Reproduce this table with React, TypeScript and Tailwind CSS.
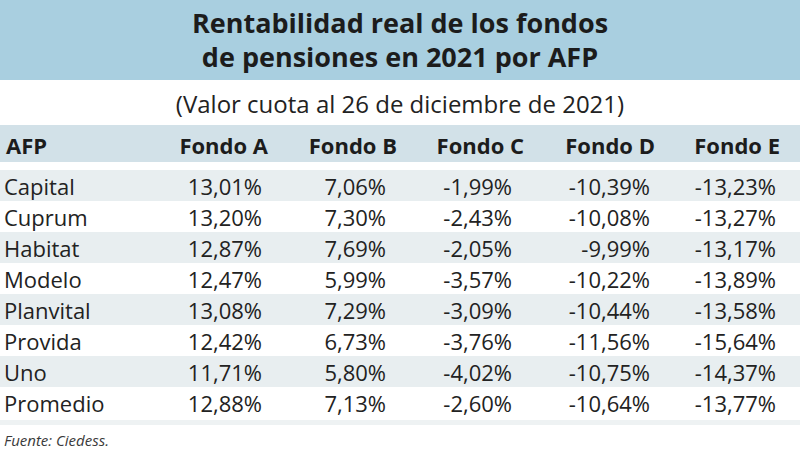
import React from "react"

const rows: [string, string, string, string, string, string][] = [
  ["Capital", "13,01%", "7,06%", "-1,99%", "-10,39%", "-13,23%"],
  ["Cuprum", "13,20%", "7,30%", "-2,43%", "-10,08%", "-13,27%"],
  ["Habitat", "12,87%", "7,69%", "-2,05%", "-9,99%", "-13,17%"],
  ["Modelo", "12,47%", "5,99%", "-3,57%", "-10,22%", "-13,89%"],
  ["Planvital", "13,08%", "7,29%", "-3,09%", "-10,44%", "-13,58%"],
  ["Provida", "12,42%", "6,73%", "-3,76%", "-11,56%", "-15,64%"],
  ["Uno", "11,71%", "5,80%", "-4,02%", "-10,75%", "-14,37%"],
  ["Promedio", "12,88%", "7,13%", "-2,60%", "-10,64%", "-13,77%"],
]

const cols = "grid grid-cols-[130px_140px_128px_128px_130px_126px]"

export default function App() {
  return (
    <div className="h-[450px] w-[800px] overflow-hidden bg-white font-['Open_Sans',sans-serif] text-[#222]">
      <div className="flex h-[80px] flex-col items-center justify-center bg-[#a9cfe0] text-[27px] font-bold leading-[34px] text-[#1c1c1c]">
        <div>Rentabilidad real de los fondos</div>
        <div>de pensiones en 2021 por AFP</div>
      </div>
      <div className="flex h-[45px] items-center justify-center pt-[2px] text-[24px]">
        (Valor cuota al 26 de diciembre de 2021)
      </div>
      <div className={`${cols} h-[37px] items-center bg-[#d2e1e8] pt-[4px] text-[22px] font-bold text-[#1c1c1c]`}>
        <div className="pl-[6px]">AFP</div>
        <div className="pr-[2px] text-right">Fondo A</div>
        <div className="pr-[1px] text-right">Fondo B</div>
        <div className="pr-[2px] text-right">Fondo C</div>
        <div className="pr-[1px] text-right">Fondo D</div>
        <div className="pr-[2px] text-right">Fondo E</div>
      </div>
      <div className="h-[8px]" />
      {rows.map((r, i) => (
        <div
          key={r[0]}
          className={`${cols} h-[31px] items-center text-[22px] ${i % 2 === 0 ? "bg-[#e8eef0]" : "bg-white"}`}
        >
          <div className="pl-[4px]">{r[0]}</div>
          <div className="pr-[8px] text-right">{r[1]}</div>
          <div className="pr-[12px] text-right">{r[2]}</div>
          <div className="pr-[14px] text-right">{r[3]}</div>
          <div className="pr-[6px] text-right">{r[4]}</div>
          <div className="pr-[6px] text-right">{r[5]}</div>
        </div>
      ))}
      <div className="mt-[2px] h-[5px] bg-[#eef2f3]" />
      <div className="pl-[4px] pt-[5px] text-[15px] leading-[20px] italic text-[#3a3a3a]">Fuente: Ciedess.</div>
    </div>
  )
}
